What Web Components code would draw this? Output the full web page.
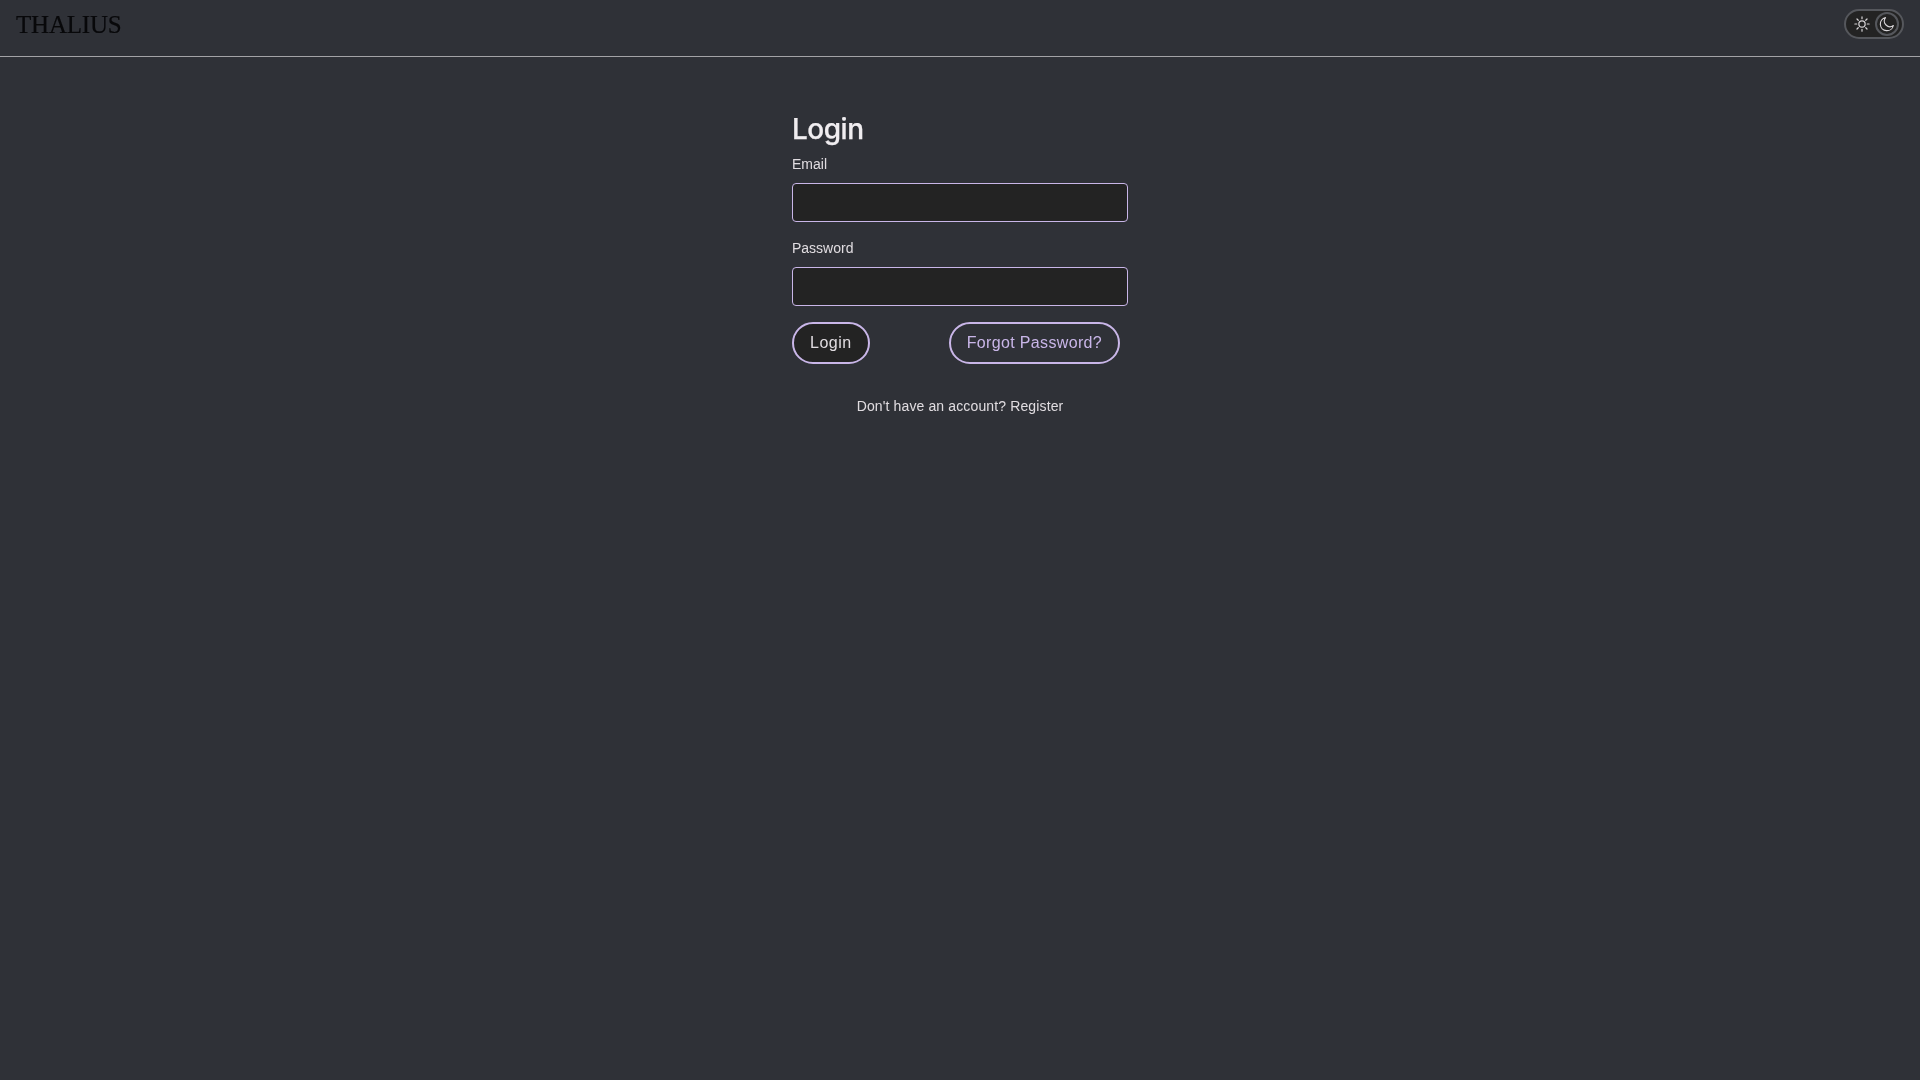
<!DOCTYPE html>
<html><head><meta charset="utf-8"><style>
html,body{margin:0;height:100%;background:#2f3137}
body{font-family:"Liberation Sans",Arial,sans-serif;color:#e0dce0}
</style></head><body>
<app-header></app-header>
<login-form></login-form>
<script>
class ThemeToggle extends HTMLElement{constructor(){super();this.attachShadow({mode:'open'}).innerHTML=`<style>
:host{display:flex;align-items:center;box-sizing:border-box;width:60px;height:30px;border:2px solid #55575c;border-radius:15px;background:#232323;padding:0 3px 0 7px;justify-content:space-between}
svg{display:block}
.sun{width:18px;height:18px}
.moon{box-sizing:border-box;width:24px;height:24px;border-radius:50%;border:2px solid #55575c;display:flex;align-items:center;justify-content:center}
.moon svg{width:18px;height:18px}
</style>
<span class="sun"><svg viewBox="0 0 24 24" width="18" height="18" fill="none" stroke="#d8d5d8" stroke-width="1.6" stroke-linecap="round"><circle cx="12" cy="12" r="4.2"/><path d="M12 2.5v2.5M12 19v2.5M2.5 12H5M19 12h2.5M5.3 5.3 7 7M17 17l1.7 1.7M5.3 18.7 7 17M17 7l1.7-1.7"/></svg></span>
<span class="moon"><svg viewBox="0 0 24 24" fill="none" stroke="#d8d5d8" stroke-width="1.5" stroke-linecap="round" stroke-linejoin="round"><path d="M10 3.5a8.8 8.8 0 1 0 10.5 10.5A7.5 7.5 0 0 1 10 3.5z"/></svg></span>`}}
customElements.define('theme-toggle',ThemeToggle);
class AppHeader extends HTMLElement{constructor(){super();this.attachShadow({mode:'open'}).innerHTML=`<style>
:host{display:flex;justify-content:space-between;align-items:flex-start;box-sizing:border-box;height:57px;border-bottom:1px solid #a3a3a6;padding:9px 16px 0;will-change:opacity}
.logo{font:25px/30px "Liberation Serif",serif;color:#08080a;letter-spacing:-.2px;-webkit-text-stroke:.2px #08080a;margin-top:1px}
</style><div class="logo">THALIUS</div><theme-toggle></theme-toggle>`}}
customElements.define('app-header',AppHeader);
class FormField extends HTMLElement{constructor(){super();this.attachShadow({mode:'open'}).innerHTML=`<style>
:host{display:block;margin-bottom:18px}
label{display:block;font-size:14px;line-height:16px;margin-bottom:11px}
input{display:block;box-sizing:border-box;width:336px;height:39px;background:#232323;border:1px solid #c9b6e8;border-radius:4px;outline:none;color:#e0dce0;margin:0}
</style><label>${this.getAttribute('label')}</label><input type="${this.getAttribute('type')}">`}}
customElements.define('form-field',FormField);
class PillButton extends HTMLElement{constructor(){super();this.attachShadow({mode:'open'}).innerHTML=`<style>
:host{display:block;flex:none}
button{display:block;box-sizing:border-box;height:42px;padding:0 16px;border:2px solid #c9b6e8;border-radius:21px;font:16px "Liberation Sans",Arial,sans-serif;letter-spacing:.35px;white-space:nowrap;cursor:pointer;background:transparent;color:#c9b6e8}
:host([primary]) button{background:#232323;color:#e0dce0;letter-spacing:.5px}
</style><button><slot></slot></button>`}}
customElements.define('pill-button',PillButton);
class LoginForm extends HTMLElement{constructor(){super();this.attachShadow({mode:'open'}).innerHTML=`<style>
:host{display:block;width:336px;margin:0 auto;padding-top:56px;will-change:opacity}
h1{margin:0 0 11px;font:500 28px/32px Inter,"Noto Sans",sans-serif;letter-spacing:-.5px;color:#f0edf0;-webkit-text-stroke:.25px #f0edf0}
.actions{display:flex;gap:79px;margin-top:-2px}
p{margin:34px 0 0;text-align:center;font-size:14px;line-height:16px;letter-spacing:.13px}
</style><h1>Login</h1>
<form-field label="Email" type="email"></form-field>
<form-field label="Password" type="password"></form-field>
<div class="actions"><pill-button primary>Login</pill-button><pill-button>Forgot Password?</pill-button></div>
<p>Don't have an account? Register</p>`}}
customElements.define('login-form',LoginForm);
</script></body></html>
